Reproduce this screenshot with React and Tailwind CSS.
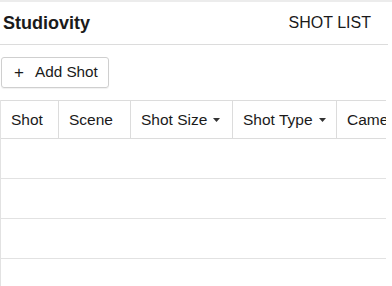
const columns = [
  { label: "Shot", width: "w-[58px]" },
  { label: "Scene", width: "w-[72px]" },
  { label: "Shot Size", width: "w-[102px]", caret: true },
  { label: "Shot Type", width: "w-[104px]", caret: true },
  { label: "Camera", width: "w-[110px]" },
];

function Caret() {
  return (
    <svg width="7" height="4" viewBox="0 0 7 4" className="ml-[6px] mt-[1px]">
      <path d="M0 0h7L3.5 4z" fill="#333" />
    </svg>
  );
}

export default function App() {
  return (
    <div className="w-[392px] h-[286px] overflow-hidden bg-white font-['Liberation_Sans',Arial,sans-serif] text-[#1a1a1a]">
      <div className="h-[2px] bg-[#ececec]" />
      <div className="w-[388px] h-[43px] flex items-center justify-between border-b border-[#dcdcdc] pl-[3px] pr-[17px]">
        <span className="text-[18px] font-bold">Studiovity</span>
        <span className="text-[16px]">SHOT LIST</span>
      </div>
      <div className="pt-[12px] pl-[1px]">
        <button className="h-[31px] w-[108px] flex items-center border border-[#cfcfcf] rounded-[3px] shadow-[0_1px_1px_rgba(0,0,0,0.06)] pl-[12px] text-[15.3px]">
          <span className="text-[17px] mr-[11px] leading-none">+</span>
          Add Shot
        </button>
      </div>
      <div className="mt-[12px] w-[386px] overflow-hidden border-l border-[#e2e2e2]">
        <div className="flex h-[39px] border-y border-[#dcdcdc] whitespace-nowrap">
          {columns.map((col, i) => (
            <div
              key={col.label}
              className={`${col.width} shrink-0 flex items-center pl-[10px] text-[15.5px] ${
                i < columns.length - 1 ? "border-r border-[#dcdcdc]" : ""
              }`}
            >
              {col.label}
              {col.caret && <Caret />}
            </div>
          ))}
        </div>
        <div className="h-[40px] border-b border-[#e2e2e2]" />
        <div className="h-[40px] border-b border-[#e2e2e2]" />
        <div className="h-[40px] border-b border-[#e2e2e2]" />
        <div className="h-[40px]" />
      </div>
    </div>
  );
}
